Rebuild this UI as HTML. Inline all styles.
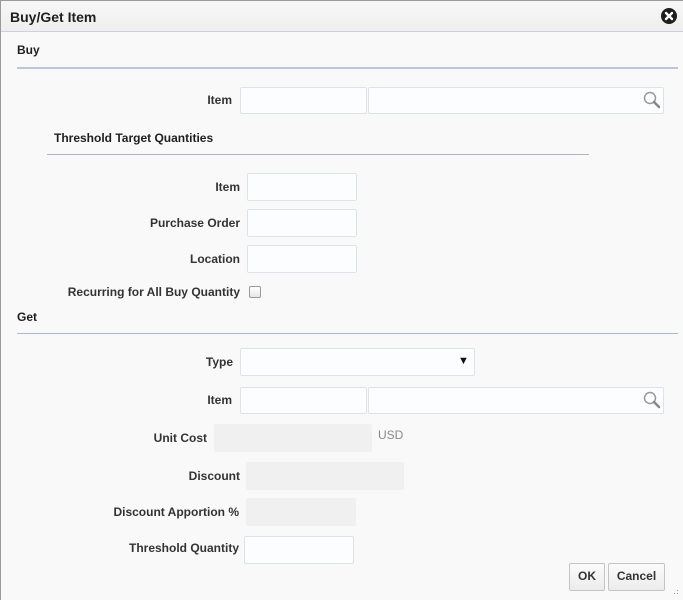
<!DOCTYPE html>
<html><head><meta charset="utf-8"><style>
*{margin:0;padding:0;box-sizing:border-box}
body{width:683px;height:600px;background:#f9f9f9;font-family:"Liberation Sans",Arial,sans-serif;position:relative;overflow:hidden}
.a{position:absolute}
.hdr{left:0;top:0;width:683px;height:32px;background:linear-gradient(#f7f7f7,#efefef);border-bottom:1px solid #c9d3de}
.t{font-size:14px;font-weight:bold;color:#1f1f1f}
.l{font-size:12px;font-weight:bold;color:#333;text-align:right;width:240px;left:0}
.in{background:#fcfdfe;border:1px solid #dfe3e8;border-radius:2px}
.ro{background:#f0f0f0;border-radius:2px}
.line{height:2px;background:#b9c7d9}
.btn{border:1px solid #c4c4c4;border-radius:2px;background:linear-gradient(#fbfbfb,#ececec);font-size:12px;font-weight:bold;color:#333;text-align:center;line-height:25px}
</style></head><body>
<div class="a hdr"></div>
<div class="a" style="left:0;top:0;width:683px;height:1px;background:#9a9a9a"></div>
<div class="a" style="left:0;top:0;width:1px;height:600px;background:#9a9a9a"></div>
<div class="a t" style="left:10px;top:9px">Buy/Get Item</div>
<svg class="a" style="left:661px;top:8px" width="16" height="16" viewBox="0 0 16 16"><circle cx="8" cy="8" r="8" fill="#1e1e1e"/><path d="M5 5L11 11M11 5L5 11" stroke="#fff" stroke-width="2.4" stroke-linecap="round"/></svg>

<div class="a t" style="left:17px;top:43px;font-size:12px">Buy</div>
<div class="a line" style="left:17px;top:67px;width:661px"></div>
<div class="a l" style="top:93px;width:232px">Item</div>
<div class="a in" style="left:240px;top:87px;width:127px;height:27px"></div>
<div class="a in" style="left:368px;top:87px;width:296px;height:27px"></div>
<svg class="a" style="left:642px;top:90px" width="20" height="20" viewBox="0 0 20 20"><circle cx="8" cy="8" r="5.5" fill="none" stroke="#999" stroke-width="1.5"/><path d="M12 12L17 17" stroke="#888" stroke-width="2.5" stroke-linecap="round"/></svg>

<div class="a t" style="left:54px;top:131px;font-size:12px">Threshold Target Quantities</div>
<div class="a line" style="left:47px;top:154px;width:542px;height:1px;background:#aab6c6"></div>
<div class="a l" style="top:180px">Item</div>
<div class="a in" style="left:247px;top:173px;width:110px;height:28px"></div>
<div class="a l" style="top:216px">Purchase Order</div>
<div class="a in" style="left:247px;top:209px;width:110px;height:28px"></div>
<div class="a l" style="top:252px">Location</div>
<div class="a in" style="left:247px;top:245px;width:110px;height:28px"></div>
<div class="a l" style="top:285px">Recurring for All Buy Quantity</div>
<div class="a" style="left:249px;top:286px;width:12px;height:12px;border:1px solid #999;border-radius:2px;background:linear-gradient(#fff,#e6e6e6)"></div>

<div class="a t" style="left:17px;top:310px;font-size:12px">Get</div>
<div class="a line" style="left:17px;top:333px;width:661px;height:1px;background:#aab9cc"></div>
<div class="a l" style="top:355px;width:233px">Type</div>
<div class="a in" style="left:240px;top:348px;width:235px;height:28px"></div>
<div class="a" style="left:458px;top:355px;font-size:11px;color:#111">▼</div>
<div class="a l" style="top:393px;width:232px">Item</div>
<div class="a in" style="left:240px;top:387px;width:127px;height:27px"></div>
<div class="a in" style="left:368px;top:387px;width:296px;height:27px"></div>
<svg class="a" style="left:642px;top:390px" width="20" height="20" viewBox="0 0 20 20"><circle cx="8" cy="8" r="5.5" fill="none" stroke="#999" stroke-width="1.5"/><path d="M12 12L17 17" stroke="#888" stroke-width="2.5" stroke-linecap="round"/></svg>
<div class="a l" style="top:431px;width:207px">Unit Cost</div>
<div class="a ro" style="left:214px;top:424px;width:158px;height:28px"></div>
<div class="a" style="left:378px;top:428px;font-size:12px;color:#888">USD</div>
<div class="a l" style="top:469px">Discount</div>
<div class="a ro" style="left:246px;top:462px;width:158px;height:28px"></div>
<div class="a l" style="top:505px;width:239px">Discount Apportion %</div>
<div class="a ro" style="left:246px;top:498px;width:110px;height:28px"></div>
<div class="a l" style="top:541px;width:239px">Threshold Quantity</div>
<div class="a in" style="left:244px;top:536px;width:110px;height:28px"></div>

<div class="a btn" style="left:569px;top:563px;width:36px;height:28px">OK</div>
<div class="a btn" style="left:608px;top:563px;width:57px;height:28px">Cancel</div>
<div class="a" style="left:670px;top:586px;width:10px;height:10px;background:radial-gradient(circle,#999 0.6px,transparent 0.8px) 0 0/3px 3px;clip-path:polygon(100% 0,100% 100%,0 100%)"></div>
</body></html>
